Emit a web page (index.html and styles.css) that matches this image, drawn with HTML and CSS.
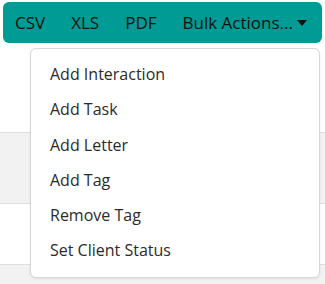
FILE: index.html
```html
<!DOCTYPE html>
<html lang="en">

<head>
    <meta charset="UTF-8">
    <meta name="viewport" content="width=device-width, initial-scale=1.0">
    <title>Clients</title>
    <link rel="stylesheet" href="styles.css">
</head>

<body>
    <div class="page">
        <div class="toolbar">
            <span class="tool-btn">CSV</span>
            <span class="tool-btn">XLS</span>
            <span class="tool-btn">PDF</span>
            <span class="tool-btn dropdown-toggle">Bulk Actions...<span class="caret"></span></span>
        </div>

        <div class="table">
            <div class="table-head"></div>
            <div class="table-row striped"></div>
            <div class="table-row"></div>
            <div class="table-row striped last"></div>
        </div>

        <ul class="dropdown-menu">
            <li class="dropdown-item">Add Interaction</li>
            <li class="dropdown-item">Add Task</li>
            <li class="dropdown-item">Add Letter</li>
            <li class="dropdown-item">Add Tag</li>
            <li class="dropdown-item">Remove Tag</li>
            <li class="dropdown-item">Set Client Status</li>
        </ul>
    </div>
</body>

</html>
```

FILE: styles.css
```css
* {
    box-sizing: border-box;
}

body {
    margin: 0;
    font-family: "Open Sans", "Noto Sans", sans-serif;
    background: #fff;
    overflow: hidden;
}

.page {
    position: relative;
    height: 284px;
    overflow: hidden;
}

.toolbar {
    display: flex;
    align-items: center;
    height: 41px;
    margin: 2px 3px 0;
    padding: 0 3px 0 0;
    background: #009b94;
    border-radius: 6px;
}

.tool-btn {
    display: flex;
    align-items: center;
    padding: 0 13px;
    font-size: 17px;
    color: #111;
    cursor: pointer;
}

.tool-btn:first-child {
    padding-left: 12px;
}

.tool-btn:last-child {
    margin-left: auto;
    padding-right: 12px;
}

.caret {
    display: inline-block;
    margin-left: 4px;
    border-top: 6px solid #111;
    border-left: 5px solid transparent;
    border-right: 5px solid transparent;
}

.table-head {
    height: 89px;
}

.table-row {
    height: 71px;
    border-top: 1px solid #dedede;
}

.table-row + .table-row {
    height: 61px;
}

.table-row.last {
    height: 20px;
}

.table-row.striped {
    background: #f2f2f2;
}

.dropdown-menu {
    position: absolute;
    top: 48px;
    left: 30px;
    width: 290px;
    margin: 0;
    padding: 8px 0;
    list-style: none;
    background: #fff;
    border: 1px solid #d6d6d6;
    border-radius: 6px;
    box-shadow: 0 1px 3px rgba(0, 0, 0, .08);
}

.dropdown-item {
    padding: 5px 19px;
    font-size: 16px;
    line-height: 25.3px;
    color: #2b2b2b;
    cursor: pointer;
}
```
